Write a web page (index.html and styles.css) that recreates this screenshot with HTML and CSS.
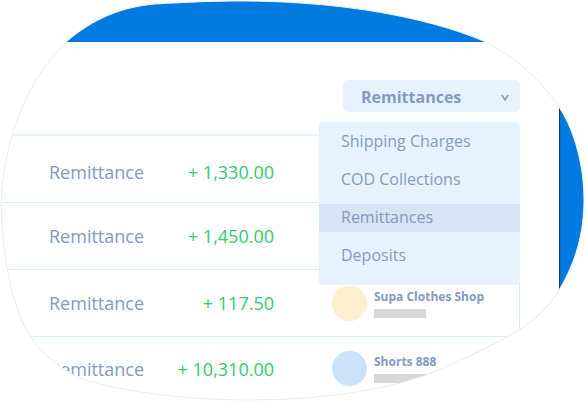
FILE: index.html
```html
<!DOCTYPE html>
<html lang="en">
<head>
<meta charset="utf-8">
<meta name="viewport" content="width=device-width, initial-scale=1">
<title>Remittances</title>
<link rel="stylesheet" href="styles.css">
</head>
<body>
<svg class="defs" width="0" height="0" aria-hidden="true">
  <clipPath id="blob" clipPathUnits="objectBoundingBox">
    <path transform="scale(0.00170648 0.00248756)" d="M1 202C5 132 30 78 66 42C94 18 122 7 155 4C190 2 215 1 240 1C330 1 420 14 486 42C520 60 542 82 559 107C576 133 584 168 584 200C584 232 576 262 559 290C549 307 535 320 519 330C490 347 455 364 421 377C370 393 310 400 250 400C190 400 130 393 85 380C66 374 38 350 30 336C12 308 2 255 1 202Z"/>
  </clipPath>
</svg>
<div class="stage">
  <main class="backdrop">
    <section class="panel">
      <header class="toolbar">
        <div class="picker">
          <select class="picker-select" aria-label="Transaction type">
            <option>Shipping Charges</option>
            <option>COD Collections</option>
            <option selected>Remittances</option>
            <option>Deposits</option>
          </select>
          <svg class="picker-arrow" viewBox="0 0 8 7" aria-hidden="true"><path d="M.8 1L4 6L7.2 1"/></svg>
          <div class="menu">
            <button class="menu-item" type="button">Shipping Charges</button>
            <button class="menu-item" type="button">COD Collections</button>
            <button class="menu-item menu-item-active" type="button">Remittances</button>
            <button class="menu-item" type="button">Deposits</button>
          </div>
        </div>
      </header>
      <table class="ledger">
        <tbody>
          <tr><td class="kind">Remittance</td><td class="amount">+ 1,330.00</td><td class="shop"></td></tr>
          <tr><td class="kind">Remittance</td><td class="amount">+ 1,450.00</td><td class="shop"></td></tr>
          <tr>
            <td class="kind">Remittance</td><td class="amount">+ 117.50</td>
            <td class="shop"><div class="shop-card"><span class="avatar avatar-yellow"></span><div class="shop-text"><span class="shop-name">Supa Clothes Shop</span><span class="bar"></span></div></div></td>
          </tr>
          <tr>
            <td class="kind">Remittance</td><td class="amount">+ 10,310.00</td>
            <td class="shop"><div class="shop-card"><span class="avatar avatar-blue"></span><div class="shop-text"><span class="shop-name">Shorts 888</span><span class="bar"></span></div></div></td>
          </tr>
        </tbody>
      </table>
    </section>
  </main>
  <svg class="outline" viewBox="0 0 586 402" preserveAspectRatio="none" aria-hidden="true">
    <path d="M1 202C5 132 30 78 66 42C94 18 122 7 155 4C190 2 215 1 240 1C330 1 420 14 486 42C520 60 542 82 559 107C576 133 584 168 584 200C584 232 576 262 559 290C549 307 535 320 519 330C490 347 455 364 421 377C370 393 310 400 250 400C190 400 130 393 85 380C66 374 38 350 30 336C12 308 2 255 1 202Z"/>
  </svg>
</div>
</body>
</html>
```
FILE: styles.css
```css
* {
  box-sizing: border-box;
}

body {
  margin: 0;
  background: #fff;
  color: #8599c1;
  font-family: "Open Sans", "Noto Sans", sans-serif;
}

.defs {
  position: absolute;
}

.stage {
  position: relative;
  overflow: hidden;
}

.backdrop {
  padding: 42px 27px 0 0;
  background: #007ae1;
  clip-path: url(#blob);
}

.panel {
  padding: 0 39px 1px 0;
  background: #fff;
  box-shadow: 1px 1px 1px rgba(0, 0, 0, 0.5);
}

.toolbar {
  display: flex;
  justify-content: flex-end;
  padding: 38px 0 22px;
}

.picker {
  position: relative;
  width: 177px;
}

.picker-select {
  display: block;
  width: 100%;
  height: 32px;
  padding: 2px 32px 0 18px;
  border: 0;
  border-radius: 5px;
  background: #e6f3ff;
  color: #8599c1;
  font: bold 16px/24px "Open Sans", "Noto Sans", sans-serif;
  appearance: none;
}

.picker-arrow {
  position: absolute;
  top: 14px;
  right: 11px;
  width: 8px;
  height: 7px;
  fill: none;
  stroke: #8599c1;
  stroke-width: 1.5;
}

.menu {
  position: absolute;
  z-index: 1;
  top: 42px;
  right: 0;
  display: flex;
  flex-direction: column;
  gap: 10px;
  width: 201px;
  padding: 6px 0 15px;
  border-radius: 4px;
  background: #e6f3ff;
}

.menu-item {
  height: 28px;
  padding: 0 22px 2px;
  border: 0;
  background: transparent;
  color: #8599c1;
  font: 16px/24px "Open Sans", "Noto Sans", sans-serif;
  text-align: left;
}

.menu-item-active {
  background: #d7e3f7;
}

.ledger {
  width: 100%;
  border-top: 2px solid #e6f3ff;
  border-right: 1px solid #d9ebfc;
  border-spacing: 0;
  table-layout: fixed;
}

.ledger td {
  height: 67px;
  padding: 0;
  border-bottom: 1px solid #d9ebfc;
  font-size: 18px;
  line-height: 24px;
}

.ledger tr:first-child td {
  padding-top: 6px;
}

.ledger tr:last-child td {
  height: 64px;
}

.ledger .kind {
  width: 160px;
  padding-left: 49px;
}

.ledger .amount {
  width: 114px;
  color: #2fcb6e;
  text-align: right;
  white-space: nowrap;
}

.ledger .shop {
  padding-left: 58px;
}

.shop-card {
  display: flex;
  gap: 7px;
  align-items: center;
}

.avatar {
  width: 35px;
  height: 35px;
  border-radius: 50%;
}

.avatar-yellow {
  background: #fdefcd;
}

.avatar-blue {
  background: #cbe3f8;
}

.shop-text {
  display: flex;
  flex-direction: column;
  gap: 4px;
}

.shop-name {
  font-size: 12px;
  font-weight: bold;
  line-height: 16px;
  white-space: nowrap;
}

.bar {
  width: 52px;
  height: 9px;
  background: #d8d8d8;
}

.outline {
  position: absolute;
  inset: 0;
  width: 100%;
  height: 100%;
  fill: none;
  stroke: #f3f3f3;
  stroke-width: 1;
  pointer-events: none;
}
```
